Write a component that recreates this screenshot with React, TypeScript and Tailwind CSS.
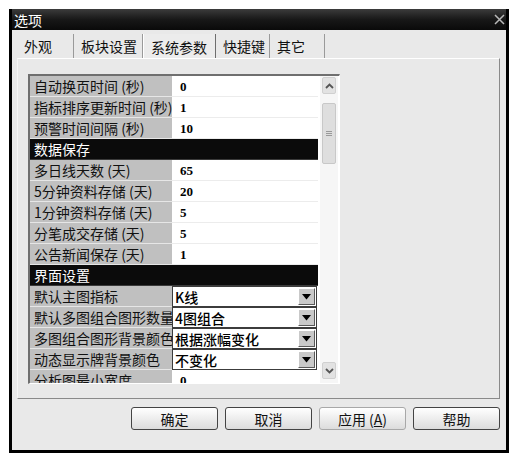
import React from "react";

type Row =
  | { kind: "header"; label: string }
  | { kind: "value"; label: string; value: string }
  | { kind: "combo"; label: string; value: string };

const rows: Row[] = [
  { kind: "value", label: "自动换页时间 (秒)", value: "0" },
  { kind: "value", label: "指标排序更新时间 (秒)", value: "1" },
  { kind: "value", label: "预警时间间隔 (秒)", value: "10" },
  { kind: "header", label: "数据保存" },
  { kind: "value", label: "多日线天数 (天)", value: "65" },
  { kind: "value", label: "5分钟资料存储 (天)", value: "20" },
  { kind: "value", label: "1分钟资料存储 (天)", value: "5" },
  { kind: "value", label: "分笔成交存储 (天)", value: "5" },
  { kind: "value", label: "公告新闻保存 (天)", value: "1" },
  { kind: "header", label: "界面设置" },
  { kind: "combo", label: "默认主图指标", value: "K线" },
  { kind: "combo", label: "默认多图组合图形数量", value: "4图组合" },
  { kind: "combo", label: "多图组合图形背景颜色", value: "根据涨幅变化" },
  { kind: "combo", label: "动态显示牌背景颜色", value: "不变化" },
  { kind: "value", label: "分析图最小宽度", value: "0" },
];

const tabs = [
  { label: "外观", width: "w-[57px]" },
  { label: "板块设置", width: "w-[69px]" },
  { label: "系统参数", width: "w-[73px]", active: true },
  { label: "快捷键", width: "w-[54px]" },
  { label: "其它", width: "w-[55px]" },
];

const cjk = "font-['SimSun','Noto_Sans_CJK_SC',sans-serif]";

function PropertyRow({ row }: { row: Row }) {
  if (row.kind === "header") {
    return (
      <div className="flex h-[21px] shrink-0 items-center border-b border-[#3a3a3a] bg-[#0b0b0b] pl-[4px] text-[14px] leading-none text-white">
        {row.label}
      </div>
    );
  }

  return (
    <div className="flex h-[21px] shrink-0">
      <div className="flex w-[142px] shrink-0 items-center overflow-hidden whitespace-nowrap border-b border-[#e6e6e6] bg-[#c0c0c0] pl-[4px] text-[14px] leading-none text-[#111]">
        {row.label}
      </div>

      {row.kind === "combo" ? (
        <div className="flex w-[145px] shrink-0 border border-[#3c3c3c] bg-white">
          <span className="flex flex-1 items-center pl-[2px] text-[14px] font-medium leading-none text-black">
            {row.value}
          </span>
          <span className="my-[1px] mr-[1px] flex w-[17px] items-center justify-center border border-t-white border-l-white border-r-[#5a5a5a] border-b-[#5a5a5a] bg-[#c9c9c9]">
            <svg width="9" height="6" viewBox="0 0 9 6">
              <path d="M0 0 H9 L4.5 5.5 Z" fill="#000" />
            </svg>
          </span>
        </div>
      ) : (
        <div className="flex w-[146px] shrink-0 items-center border-b border-[#ececec] bg-white pl-[8px] font-['Liberation_Serif',serif] text-[13px] font-bold leading-none text-black">
          {row.value}
        </div>
      )}
    </div>
  );
}

function ScrollButton({ up }: { up?: boolean }) {
  return (
    <div className="mx-[2px] flex h-[17px] items-center justify-center rounded-[2px] border border-[#d0d0d0] bg-[#e2e2e2]">
      <svg width="9" height="6" viewBox="0 0 9 6">
        <path
          d={up ? "M1 5 L4.5 1.5 L8 5" : "M1 1 L4.5 4.5 L8 1"}
          fill="none"
          stroke="#555"
          strokeWidth="1.8"
        />
      </svg>
    </div>
  );
}

function Button({ label, disabled }: { label: React.ReactNode; disabled?: boolean }) {
  return (
    <button
      type="button"
      className={`flex h-[23px] w-[87px] items-center justify-center rounded-[3px] border bg-gradient-to-b from-white to-[#dcdcdc] text-[14px] leading-none text-[#111] ${
        disabled ? "border-[#a8a8a8]" : "border-[#444]"
      }`}
    >
      {label}
    </button>
  );
}

export default function App() {
  return (
    <main className={`min-h-[454px] bg-white pl-[9px] pt-[9px] ${cjk}`}>
      <div className="flex h-[444px] w-[500px] flex-col border-x-[3px] border-b-[3px] border-black bg-[#e9e9e9]">
        <header className="flex h-[21px] shrink-0 items-center justify-between bg-gradient-to-b from-[#3c3c3c] via-[#181818] to-[#0a0a0a] pl-[2px] pr-[1px]">
          <span className="text-[14px] leading-none text-white">选项</span>
          <svg width="11" height="11" viewBox="0 0 11 11">
            <path d="M1 1 L10 10 M10 1 L1 10" stroke="#b8b8b8" strokeWidth="1.5" />
          </svg>
        </header>

        <div className="ml-[5px] mt-[4px] flex h-[24px] shrink-0 items-stretch">
          {tabs.map((tab) => (
            <div
              key={tab.label}
              className={`flex ${tab.width} items-center border-r pl-[7px] text-[14px] leading-none text-[#111] ${
                tab.active
                  ? "-mb-[1px] border-l border-l-white border-r-[#6e6e6e] bg-[#ececec]"
                  : "border-r-[#9a9a9a]"
              }`}
            >
              {tab.label}
            </div>
          ))}
        </div>

        <section className="ml-[5px] mr-[6px] h-[341px] shrink-0 border border-b-[#8a8a8a] border-l-[#f6f6f6] border-r-[#8a8a8a] border-t-white pl-[10px] pt-[15px]">
          <div className="flex h-[310px] w-[312px] border-b border-l-2 border-r border-t-2 border-b-white border-l-[#6f6f6f] border-r-white border-t-[#6f6f6f] bg-white">
            <div className="flex h-[307px] w-[288px] flex-col overflow-hidden">
              {rows.map((row) => (
                <PropertyRow key={row.label} row={row} />
              ))}
            </div>

            <div className="ml-[2px] flex w-[18px] flex-col bg-[#f6f6f6] pt-[1px]">
              <ScrollButton up />
              <div className="mx-[2px] mt-[9px] flex h-[61px] items-center justify-center rounded-[2px] border border-[#c8c8c8] bg-[#dedede]">
                <div className="flex flex-col gap-[1px]">
                  <span className="h-px w-[6px] bg-[#999]" />
                  <span className="h-px w-[6px] bg-[#999]" />
                  <span className="h-px w-[6px] bg-[#999]" />
                </div>
              </div>
              <div className="flex-1" />
              <div className="mb-[4px]">
                <ScrollButton />
              </div>
            </div>
          </div>
        </section>

        <div className="mr-[6px] mt-[8px] flex justify-end gap-[7px]">
          <Button label="确定" />
          <Button label="取消" />
          <Button
            disabled
            label={
              <>
                应用 (<span className="underline">A</span>)
              </>
            }
          />
          <Button label="帮助" />
        </div>
      </div>
    </main>
  );
}
